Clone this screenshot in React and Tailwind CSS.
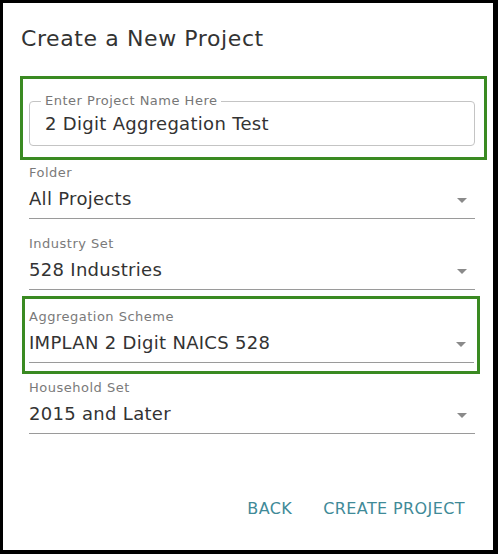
import React from "react";

const font = { fontFamily: '"DejaVu Sans", sans-serif' };

const ArrowDrop = () => (
  <svg width="24" height="24" viewBox="0 0 24 24" className="shrink-0 fill-[#8a8a8a]">
    <path d="M7 10l5 5 5-5z" />
  </svg>
);

function SelectField({ label, value }) {
  return (
    <div className="flex flex-col">
      <span className="h-[19px] text-[13px] leading-[19px] tracking-[0.5px] text-[#7a7a7a]">{label}</span>
      <div className="flex h-[37px] items-center justify-between border-b border-[#9a9a9a] pb-[3px]">
        <span className="text-[18px] tracking-[0.3px] text-[#333]">{value}</span>
        <span className="mr-[1px] mt-[2px]">
          <ArrowDrop />
        </span>
      </div>
    </div>
  );
}

export default function App() {
  return (
    <div
      style={font}
      className="flex h-[554px] w-[498px] flex-col border-b-[4px] border-l-[3px] border-r-[5px] border-t-[3px] border-black bg-white"
    >
      {/* Title */}
      <h2 className="pl-[18px] pt-[23px] text-[22px] leading-[26px] tracking-[0.6px] text-[#333]">
        Create a New Project
      </h2>

      {/* Project name */}
      <div className="ml-[17px] mt-[24px] w-[467px] border-[3px] border-[#3a8a22] pb-[11px] pl-[6px] pr-[9px] pt-[22px]">
        <div className="relative flex h-[45px] items-center rounded-[4px] border border-[#c4c4c4] pl-[15px]">
          <span className="absolute -top-[10px] left-[11px] bg-white px-[4px] text-[13px] leading-[18px] tracking-[0.5px] text-[#777]">
            Enter Project Name Here
          </span>
          <span className="text-[18px] tracking-[0.3px] text-[#333]">2 Digit Aggregation Test</span>
        </div>
      </div>

      {/* Folder + Industry */}
      <div className="ml-[26px] mt-[3px] flex w-[446px] flex-col gap-[15px]">
        <SelectField label="Folder" value="All Projects" />
        <SelectField label="Industry Set" value="528 Industries" />
      </div>

      {/* Aggregation */}
      <div className="ml-[19px] mt-[6px] w-[458px] border-[3px] border-[#3a8a22] pb-[8px] pl-[4px] pr-[3px] pt-[8px]">
        <SelectField label="Aggregation Scheme" value="IMPLAN 2 Digit NAICS 528" />
      </div>

      {/* Household */}
      <div className="ml-[26px] mt-[4px] w-[446px]">
        <SelectField label="Household Set" value="2015 and Later" />
      </div>

      {/* Actions */}
      <div className="mt-auto flex items-center justify-end gap-[31px] pb-[29px] pr-[28px]">
        <button className="text-[16px] uppercase tracking-[0.4px] text-[#3f8a98]">Back</button>
        <button className="text-[16px] uppercase tracking-[0.4px] text-[#3f8a98]">Create Project</button>
      </div>
    </div>
  );
}
